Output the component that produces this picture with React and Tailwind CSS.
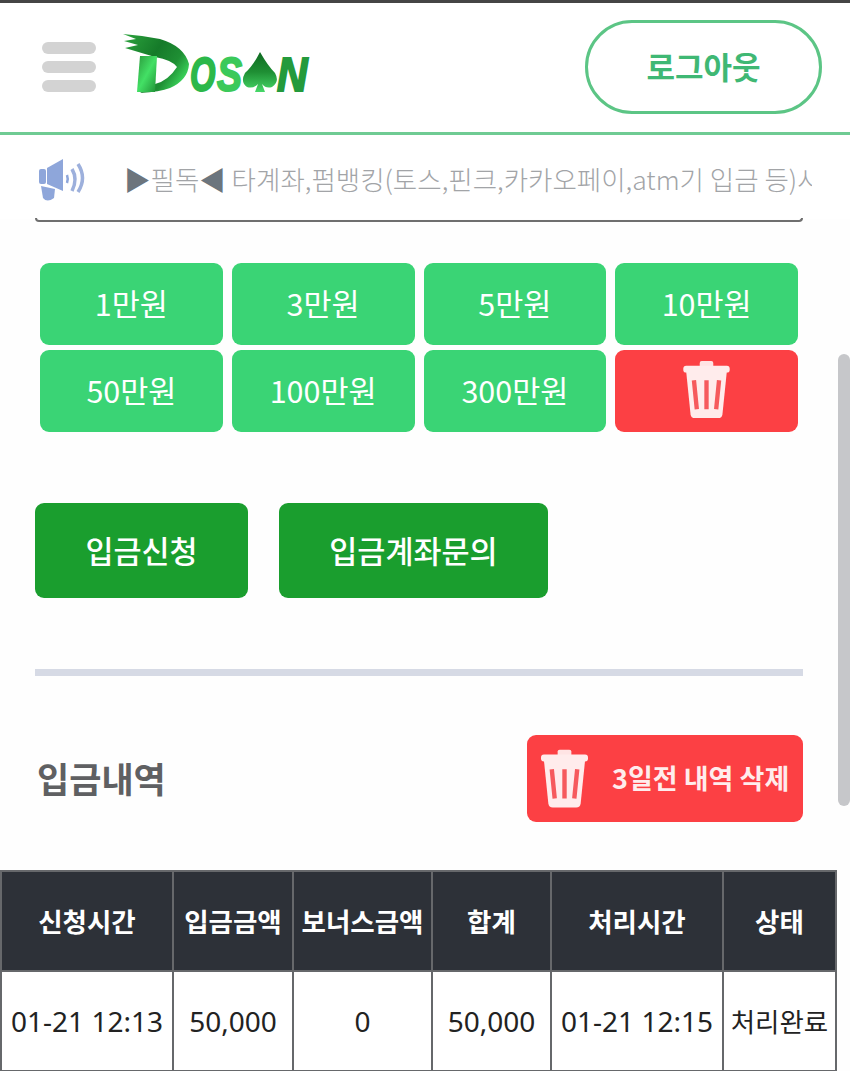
import React from "react";

const kr = "font-['Noto_Sans_CJK_KR','Noto_Sans',sans-serif]";

function TrashIcon({ className }) {
  return (
    <svg viewBox="0 0 48 60" className={className} fill="none">
      <rect x="17" y="0" width="14" height="7" rx="2" fill="#ffe4e4" />
      <rect x="0" y="5" width="48" height="7" rx="3" fill="#ffecec" />
      <path d="M3 11 H45 L40.5 55 Q40 59 36 59 H12 Q8 59 7.5 55 Z" fill="#ffecec" />
      <path d="M11 20 L14 50 M24 20 V50 M37 20 L34 50" stroke="#f65a5d" strokeWidth="4.5" />
    </svg>
  );
}

function SpeakerIcon() {
  return (
    <svg viewBox="0 0 46 44" className="w-[46px] h-[44px] shrink-0 mt-[2px]">
      <rect x="0" y="11" width="7" height="15" rx="2" fill="#8ea6da" />
      <path d="M8 10 L24 1 V33 L8 26 Z" fill="#8ea6da" />
      <path d="M2 28 L16 31 L15 40 Q8 45 4 40 Z" fill="#8ea6da" />
      <path d="M28 17 Q29.5 21 28 25" stroke="#8ea6da" strokeWidth="2.5" fill="none" />
      <path d="M33 11 Q39 21 33 33" stroke="#9db0dc" strokeWidth="3.5" fill="none" />
      <path d="M39 6 Q48 20 39 34" stroke="#9db0dc" strokeWidth="3.5" fill="none" />
    </svg>
  );
}

const letterClass =
  "absolute top-[17px] origin-left text-[48px] leading-[48px] font-bold italic font-['Liberation_Sans',sans-serif]";

function Logo() {
  return (
    <div className="relative w-[190px] h-[62px] ml-[26px] -mt-[5px] shrink-0">
      <svg viewBox="0 0 190 62" className="absolute inset-0 w-full h-full">
        <defs>
          <linearGradient id="brush" x1="0" x2="1" y1="0" y2="0.6">
            <stop offset="0" stopColor="#2da53e" />
            <stop offset="0.5" stopColor="#157a29" />
            <stop offset="0.8" stopColor="#1f8f34" />
            <stop offset="1" stopColor="#39cf58" />
          </linearGradient>
          <linearGradient id="stem" x1="0" x2="1" y1="0" y2="1">
            <stop offset="0" stopColor="#2a9a3c" />
            <stop offset="0.5" stopColor="#43e065" />
            <stop offset="1" stopColor="#1f8f34" />
          </linearGradient>
          <linearGradient id="spade" x1="0" x2="0" y1="0" y2="1">
            <stop offset="0" stopColor="#0f6a22" />
            <stop offset="0.5" stopColor="#1f8f34" />
            <stop offset="1" stopColor="#46d868" />
          </linearGradient>
        </defs>
        <path
          d="M1 0 L20 2 L38 5 Q62 12 67 30 Q66 46 48 54 Q38 58 18 59 L33 50 Q46 47 55 33 Q50 26 33 23 L3 14 L16 11 L2 7 L14 5 Z"
          fill="url(#brush)"
        />
        <path d="M18 22 H35 L33 58 H15 Z" fill="url(#stem)" />
        <path
          d="M138 18 Q146 32 153 39 Q158 48 150 53 Q144 55 140 50 L143 58 H133 L136 50 Q131 55 125 53 Q118 48 123 39 Q131 32 138 18 Z"
          fill="url(#spade)"
        />
      </svg>
      <span className={`${letterClass} left-[68px] scale-x-[0.68] text-[#2cb84a] [-webkit-text-stroke:2px_#2cb84a]`}>O</span>
      <span className={`${letterClass} left-[95px] scale-x-[0.78] text-[#3bc95a] [-webkit-text-stroke:2px_#3bc95a]`}>S</span>
      <span className={`${letterClass} left-[155px] scale-x-[0.88] text-[#249a3c] [-webkit-text-stroke:2px_#249a3c]`}>N</span>
    </div>
  );
}

function AmountButton({ children, red }) {
  return (
    <button
      className={`h-[82px] rounded-[9px] flex items-center justify-center text-white text-[30.5px] ${
        red ? "bg-[#fc4044]" : "bg-[#3ad475]"
      }`}
    >
      {children}
    </button>
  );
}

const amounts = ["1만원", "3만원", "5만원", "10만원", "50만원", "100만원", "300만원"];
const heads = ["신청시간", "입금금액", "보너스금액", "합계", "처리시간", "상태"];
const row = ["01-21 12:13", "50,000", "0", "50,000", "01-21 12:15"];
const widths = ["w-[172px]", "w-[120px]", "w-[139px]", "w-[119px]", "w-[172px]", "w-[113px]"];

export default function App() {
  return (
    <div className={`${kr} relative w-[850px] h-[1071px] overflow-hidden bg-[#fefefe]`}>
      <header className="h-[135px] bg-white border-t-[3px] border-[#454545] border-b-[3px] border-b-[#6fcb93] flex items-center pl-[42px] pr-[28px]">
        <div className="flex flex-col gap-[7px] w-[54px] -mb-[1px] -mt-[2px]">
          <div className="h-[12px] rounded-full bg-[#d3d3d3]" />
          <div className="h-[12px] rounded-full bg-[#d3d3d3]" />
          <div className="h-[12px] rounded-full bg-[#d3d3d3]" />
        </div>
        <Logo />
        <button className="ml-auto -mt-[2px] w-[237px] h-[94px] rounded-full border-[3px] border-[#5cc585] text-[#3fb874] text-[31px] font-bold bg-white">
          로그아웃
        </button>
      </header>

      <div className="h-[84px] flex items-center pl-[39px] pt-[4px] bg-white">
        <SpeakerIcon />
        <div className="ml-[39px] w-[688px] overflow-hidden whitespace-nowrap text-[26.5px] text-[#a2a4a7] font-light">
          <span className="text-[#6c757d]">▶</span>필독<span className="text-[#6c757d]">◀</span> 타계좌,펌뱅킹(토스,핀크,카카오페이,atm기 입금 등)사용
        </div>
      </div>

      <main className="px-[35px]">
        <div className="h-[4px] w-[768px] -mt-[1px] border-b-[2px] border-x-[2px] border-[#6f6f6f] rounded-b-[4px]" />

        <div className="grid grid-cols-4 gap-x-[9px] gap-y-[5px] mt-[41px] ml-[5px] w-[758px]">
          {amounts.map((a) => (
            <AmountButton key={a}>{a}</AmountButton>
          ))}
          <AmountButton red>
            <TrashIcon className="w-[47px] h-[58px] -mt-[2px]" />
          </AmountButton>
        </div>

        <div className="flex gap-[31px] mt-[71px]">
          <button className="w-[213px] h-[95px] rounded-[9px] bg-[#1a9e2e] text-white text-[30.5px] font-medium">
            입금신청
          </button>
          <button className="w-[269px] h-[95px] rounded-[9px] bg-[#1a9e2e] text-white text-[30.5px] font-medium">
            입금계좌문의
          </button>
        </div>

        <div className="h-[7px] w-[768px] bg-[#d6dae5] mt-[71px]" />

        <div className="flex items-center justify-between w-[768px] mt-[59px]">
          <h2 className="text-[35px] font-bold text-[#5f6062] ml-[2px]">입금내역</h2>
          <button className="w-[276px] h-[87px] rounded-[9px] bg-[#fc4044] flex items-center pl-[14px] text-[#ffecec] text-[27px] font-bold">
            <TrashIcon className="w-[47px] h-[60px]" />
            <span className="ml-[24px]">3일전 내역 삭제</span>
          </button>
        </div>
      </main>

      <table className="table-fixed border-collapse mt-[48px] w-[835px] border-[2px] border-[#66686b] text-center">
        <thead>
          <tr className="h-[100px] bg-[#2d3138] text-white text-[26.5px] font-bold">
            {heads.map((h, i) => (
              <th key={h} className={`${widths[i]} p-0 whitespace-nowrap border-[2px] border-[#66686b]`}>
                {h}
              </th>
            ))}
          </tr>
        </thead>
        <tbody>
          <tr className="h-[100px] bg-white text-[#222] text-[28px]">
            {row.map((c, i) => (
              <td key={i} className="p-0 whitespace-nowrap border-[2px] border-[#66686b] font-['Noto_Sans',sans-serif]">
                {c}
              </td>
            ))}
            <td className="p-0 whitespace-nowrap border-[2px] border-[#66686b] text-[26.5px]">처리완료</td>
          </tr>
        </tbody>
      </table>

      {/* scrollbar overlay */}
      <div className="absolute left-[838px] top-[354px] w-[12px] h-[452px] rounded-[6px] bg-[#c6c7ca]" />
    </div>
  );
}
